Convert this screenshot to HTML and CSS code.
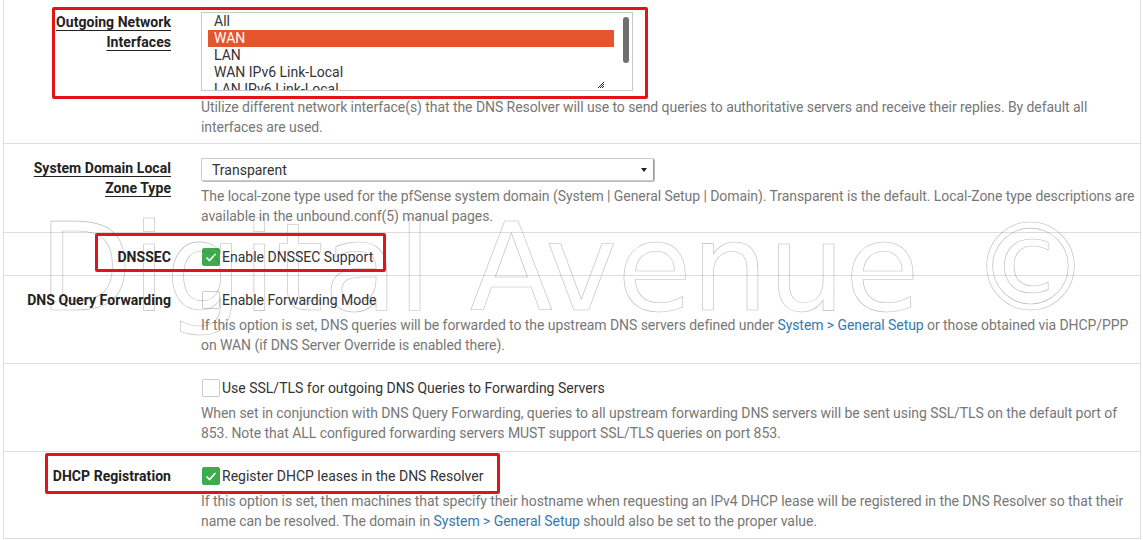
FILE: index.html
```html
<!DOCTYPE html>
<html>
<head>
<meta charset="utf-8">
<link rel="stylesheet" href="styles.css">
</head>
<body>
<div class="panel">
  <div class="row r1">
    <div class="lbl"><span class="req">Outgoing Network Interfaces</span></div>
    <div class="ctl">
      <div class="listbox">
        <div class="opts">
          <div class="opt">All</div>
          <div class="opt sel">WAN</div>
          <div class="opt">LAN</div>
          <div class="opt">WAN IPv6 Link-Local</div>
          <div class="opt">LAN IPv6 Link-Local</div>
        </div>
        <div class="thumb"></div>
        <svg class="grip" width="8" height="8" viewBox="0 0 8 8"><path d="M7 1L1 7M7 3L3 7M7 5L5 7" stroke="#333" stroke-width="1"/></svg>
      </div>
      <p class="help h1">Utilize different network interface(s) that the DNS Resolver will use to send queries to authoritative servers and receive their replies. By default all interfaces are used.</p>
    </div>
  </div>

  <div class="row r2">
    <div class="lbl"><span class="req">System Domain Local Zone Type</span></div>
    <div class="ctl">
      <div class="select"><span>Transparent</span><span class="caret"></span></div>
      <p class="help">The local-zone type used for the pfSense system domain (System | General Setup | Domain). Transparent is the default. Local-Zone type descriptions are available in the unbound.conf(5) manual pages.</p>
    </div>
  </div>

  <div class="row">
    <div class="lbl">DNSSEC</div>
    <div class="ctl">
      <label class="check"><span class="box on"><svg width="18" height="18" viewBox="0 0 18 18"><path d="M4.5 9.5L7.5 12.5L13.5 6" fill="none" stroke="#fff" stroke-width="1.6"/></svg></span>Enable DNSSEC Support</label>
    </div>
  </div>

  <div class="row">
    <div class="lbl">DNS Query Forwarding</div>
    <div class="ctl">
      <label class="check"><span class="box"></span>Enable Forwarding Mode</label>
      <p class="help">If this option is set, DNS queries will be forwarded to the upstream DNS servers defined under <a class="lnk">System &gt; General Setup</a> or those obtained via DHCP/PPP on WAN (if DNS Server Override is enabled there).</p>
    </div>
  </div>

  <div class="row">
    <div class="lbl"></div>
    <div class="ctl">
      <label class="check"><span class="box"></span>Use SSL/TLS for outgoing DNS Queries to Forwarding Servers</label>
      <p class="help">When set in conjunction with DNS Query Forwarding, queries to all upstream forwarding DNS servers will be sent using SSL/TLS on the default port of 853. Note that ALL configured forwarding servers MUST support SSL/TLS queries on port 853.</p>
    </div>
  </div>

  <div class="row last">
    <div class="lbl">DHCP Registration</div>
    <div class="ctl">
      <label class="check"><span class="box on"><svg width="18" height="18" viewBox="0 0 18 18"><path d="M4.5 9.5L7.5 12.5L13.5 6" fill="none" stroke="#fff" stroke-width="1.6"/></svg></span>Register DHCP leases in the DNS Resolver</label>
      <p class="help">If this option is set, then machines that specify their hostname when requesting an IPv4 DHCP lease will be registered in the DNS Resolver so that their name can be resolved. The domain in <a class="lnk">System &gt; General Setup</a> should also be set to the proper value.</p>
    </div>
  </div>

  <div class="watermark">Digital Avenue <span class="copy">©</span></div>

  <div class="mark m1"></div>
  <div class="mark m2"></div>
  <div class="mark m3"></div>
</div>
</body>
</html>
```

FILE: styles.css
```css
* { box-sizing: border-box; }
html, body { margin: 0; padding: 0; background: #fff; }
body {
  font-family: Roboto, "Liberation Sans", sans-serif;
  font-size: 14px;
  line-height: 20px;
  color: #333;
  overflow: hidden;
}
.panel {
  position: relative;
  margin: 0 2px 0 3px;
  border-left: 1px solid #ddd;
  border-right: 1px solid #ddd;
  border-bottom: 1px solid #ddd;
}
.row {
  display: grid;
  grid-template-columns: 167px 1fr;
  column-gap: 30px;
  padding: 14px 0 8px 0;
  border-top: 1px solid #ddd;
}
.row.r1 { border-top: none; padding-top: 12px; padding-bottom: 6px; }
.row.r2 { padding-bottom: 6px; }
.row.last { padding-bottom: 7px; }
.lbl {
  text-align: right;
  font-weight: bold;
  color: #222;
  padding-left: 8px;
  letter-spacing: 0.05px;
}
.req {
  text-decoration: underline;
  text-underline-offset: 3px;
}
.ctl { min-width: 0; padding-right: 0; }
.help {
  margin: 5px 0 0 0;
  color: #777;
  letter-spacing: -0.065px;
}
.h1 { margin-top: 6px; }
.lnk { color: #3479b0; text-decoration: none; }

.listbox {
  position: relative;
  width: 432px;
  height: 79px;
  border: 1px solid #c8c8c8;
  overflow: hidden;
  color: #333;
}
.opts { margin-left: 6px; width: 406px; }
.opt { height: 17px; line-height: 17px; padding-left: 6px; white-space: nowrap; }
.opt.sel { background: #e5552b; color: #fff; }
.thumb {
  position: absolute;
  left: 421px;
  top: 4px;
  width: 6px;
  height: 46px;
  border-radius: 3px;
  background: #6f6f6f;
}
.grip { position: absolute; left: 395px; top: 68px; }

.select {
  display: flex;
  justify-content: space-between;
  align-items: center;
  width: 453px;
  height: 23px;
  padding: 0 6px 0 10px;
  border: 1px solid #ccc;
  border-right-color: #999;
  border-radius: 2px;
  box-shadow: 1px 1px 0 #bbb;
}
.caret {
  width: 0; height: 0;
  border-left: 3px solid transparent;
  border-right: 3px solid transparent;
  border-top: 4px solid #222;
}

.check { display: flex; align-items: center; gap: 2px; margin-left: 1px; color: #333; }
.box {
  display: inline-block;
  width: 18px;
  height: 18px;
  border: 1px solid #ccc;
  border-radius: 2px;
  background: #fff;
}
.box.on { background: #3eac4c; border-color: #3eac4c; }
.box svg { display: block; margin: -1px; }

.watermark {
  position: absolute;
  left: 35px;
  top: 208px;
  font-family: "DejaVu Sans", sans-serif;
  font-size: 121px;
  line-height: 121px;
  white-space: nowrap;
  color: transparent;
  -webkit-text-stroke: 0.6px rgba(70, 70, 70, 0.38);
  pointer-events: none;
}
.copy { margin-left: 12px; }

.mark {
  position: absolute;
  border: 3px solid #e3131b;
  border-radius: 2px;
  pointer-events: none;
}
.m1 { left: 48px; top: 7px; width: 596px; height: 92px; }
.m2 { left: 91px; top: 233px; width: 291px; height: 39px; }
.m3 { left: 41px; top: 453px; width: 455px; height: 41px; }
```
